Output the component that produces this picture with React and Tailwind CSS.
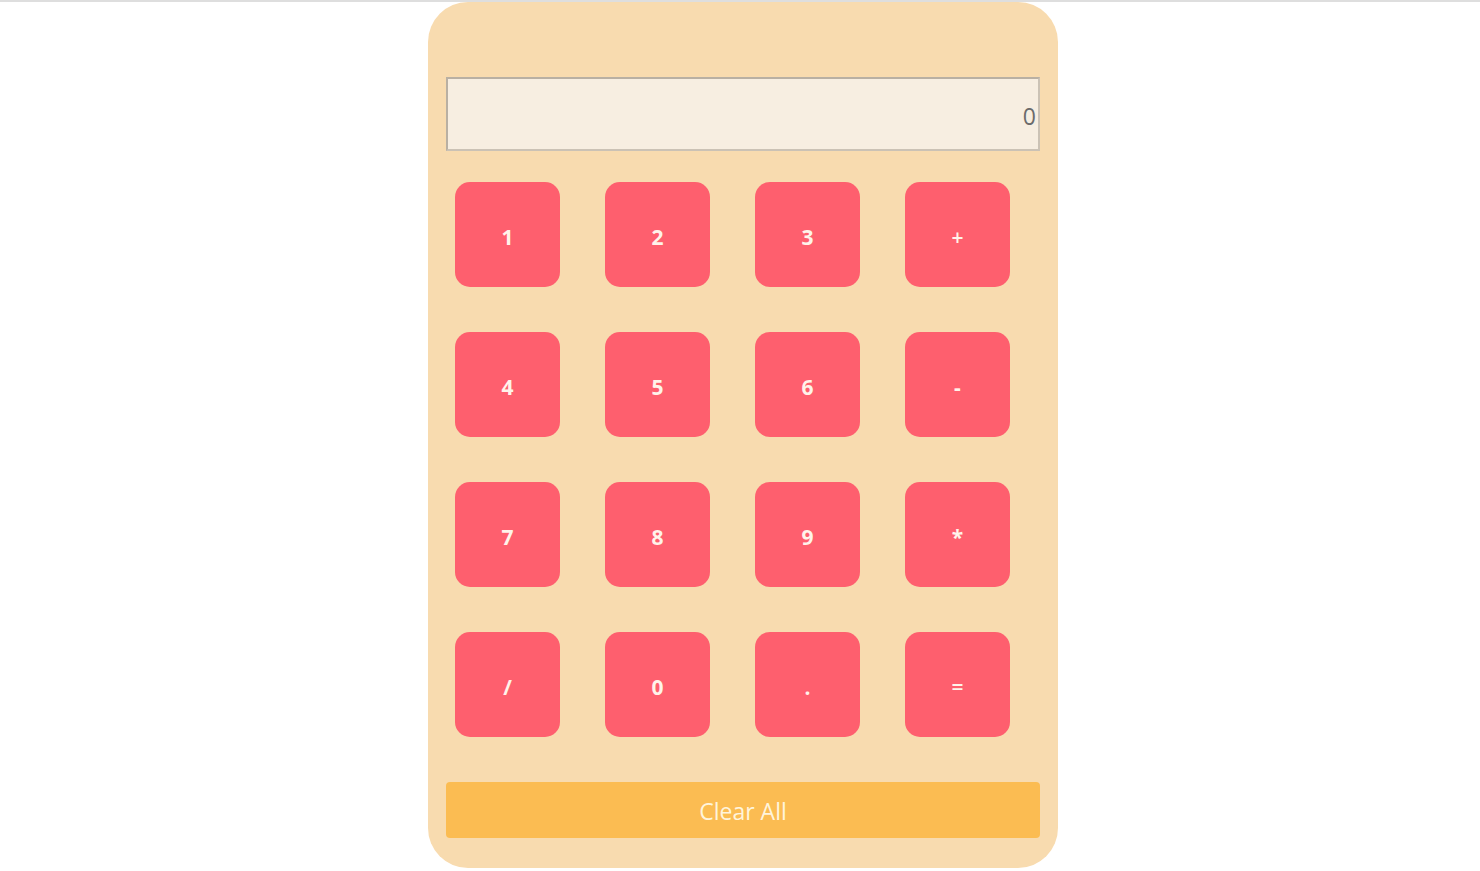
import { useState } from "react";

const keys = ["1", "2", "3", "+", "4", "5", "6", "-", "7", "8", "9", "*", "/", "0", ".", "="];

const App = () => {
  const [value, setValue] = useState("");

  const press = (k) => {
    if (k === "=") {
      try {
        // eslint-disable-next-line no-new-func
        const res = Function(`return (${value || 0})`)();
        setValue(String(res));
      } catch (e) {
        setValue("");
      }
      return;
    }
    setValue((v) => v + k);
  };

  return (
    <div className="min-h-screen bg-white border-t-2 border-[#dedede] font-['Open_Sans',sans-serif]">
      <div className="flex justify-center pl-[6px]">
        <div className="w-[630px] bg-[#f8dbaf] rounded-[40px] pt-[75px] px-[18px] pb-[30px]">
          <input
            readOnly
            value={value || "0"}
            className="w-full h-[74px] bg-[#f7eee1] border-2 border-t-[#b9b0a3] border-l-[#b9b0a3] border-r-[#cbc2b5] border-b-[#cbc2b5] text-right text-[23px] text-[#6b6b6b] pt-[3px] px-0.5 outline-none"
          />

          <div className="mt-[31px] pl-[9px] grid grid-cols-[repeat(4,105px)] gap-[45px]">
            {keys.map((k) => (
              <button
                key={k}
                onClick={() => press(k)}
                className={`w-[105px] h-[105px] rounded-[15px] bg-[#fe5f6e] text-[#fff3ea] text-[21px] pt-[6px] ${
                  k === "+" || k === "=" ? "font-semibold" : "font-bold"
                }`}
              >
                {k}
              </button>
            ))}
          </div>

          <button
            onClick={() => setValue("")}
            className="mt-[45px] w-full h-[56px] rounded-[4px] bg-[#fbbc52] text-[#fff4dc] text-[23px] pt-[3px]"
          >
            Clear All
          </button>
        </div>
      </div>
    </div>
  );
};

export default App;
